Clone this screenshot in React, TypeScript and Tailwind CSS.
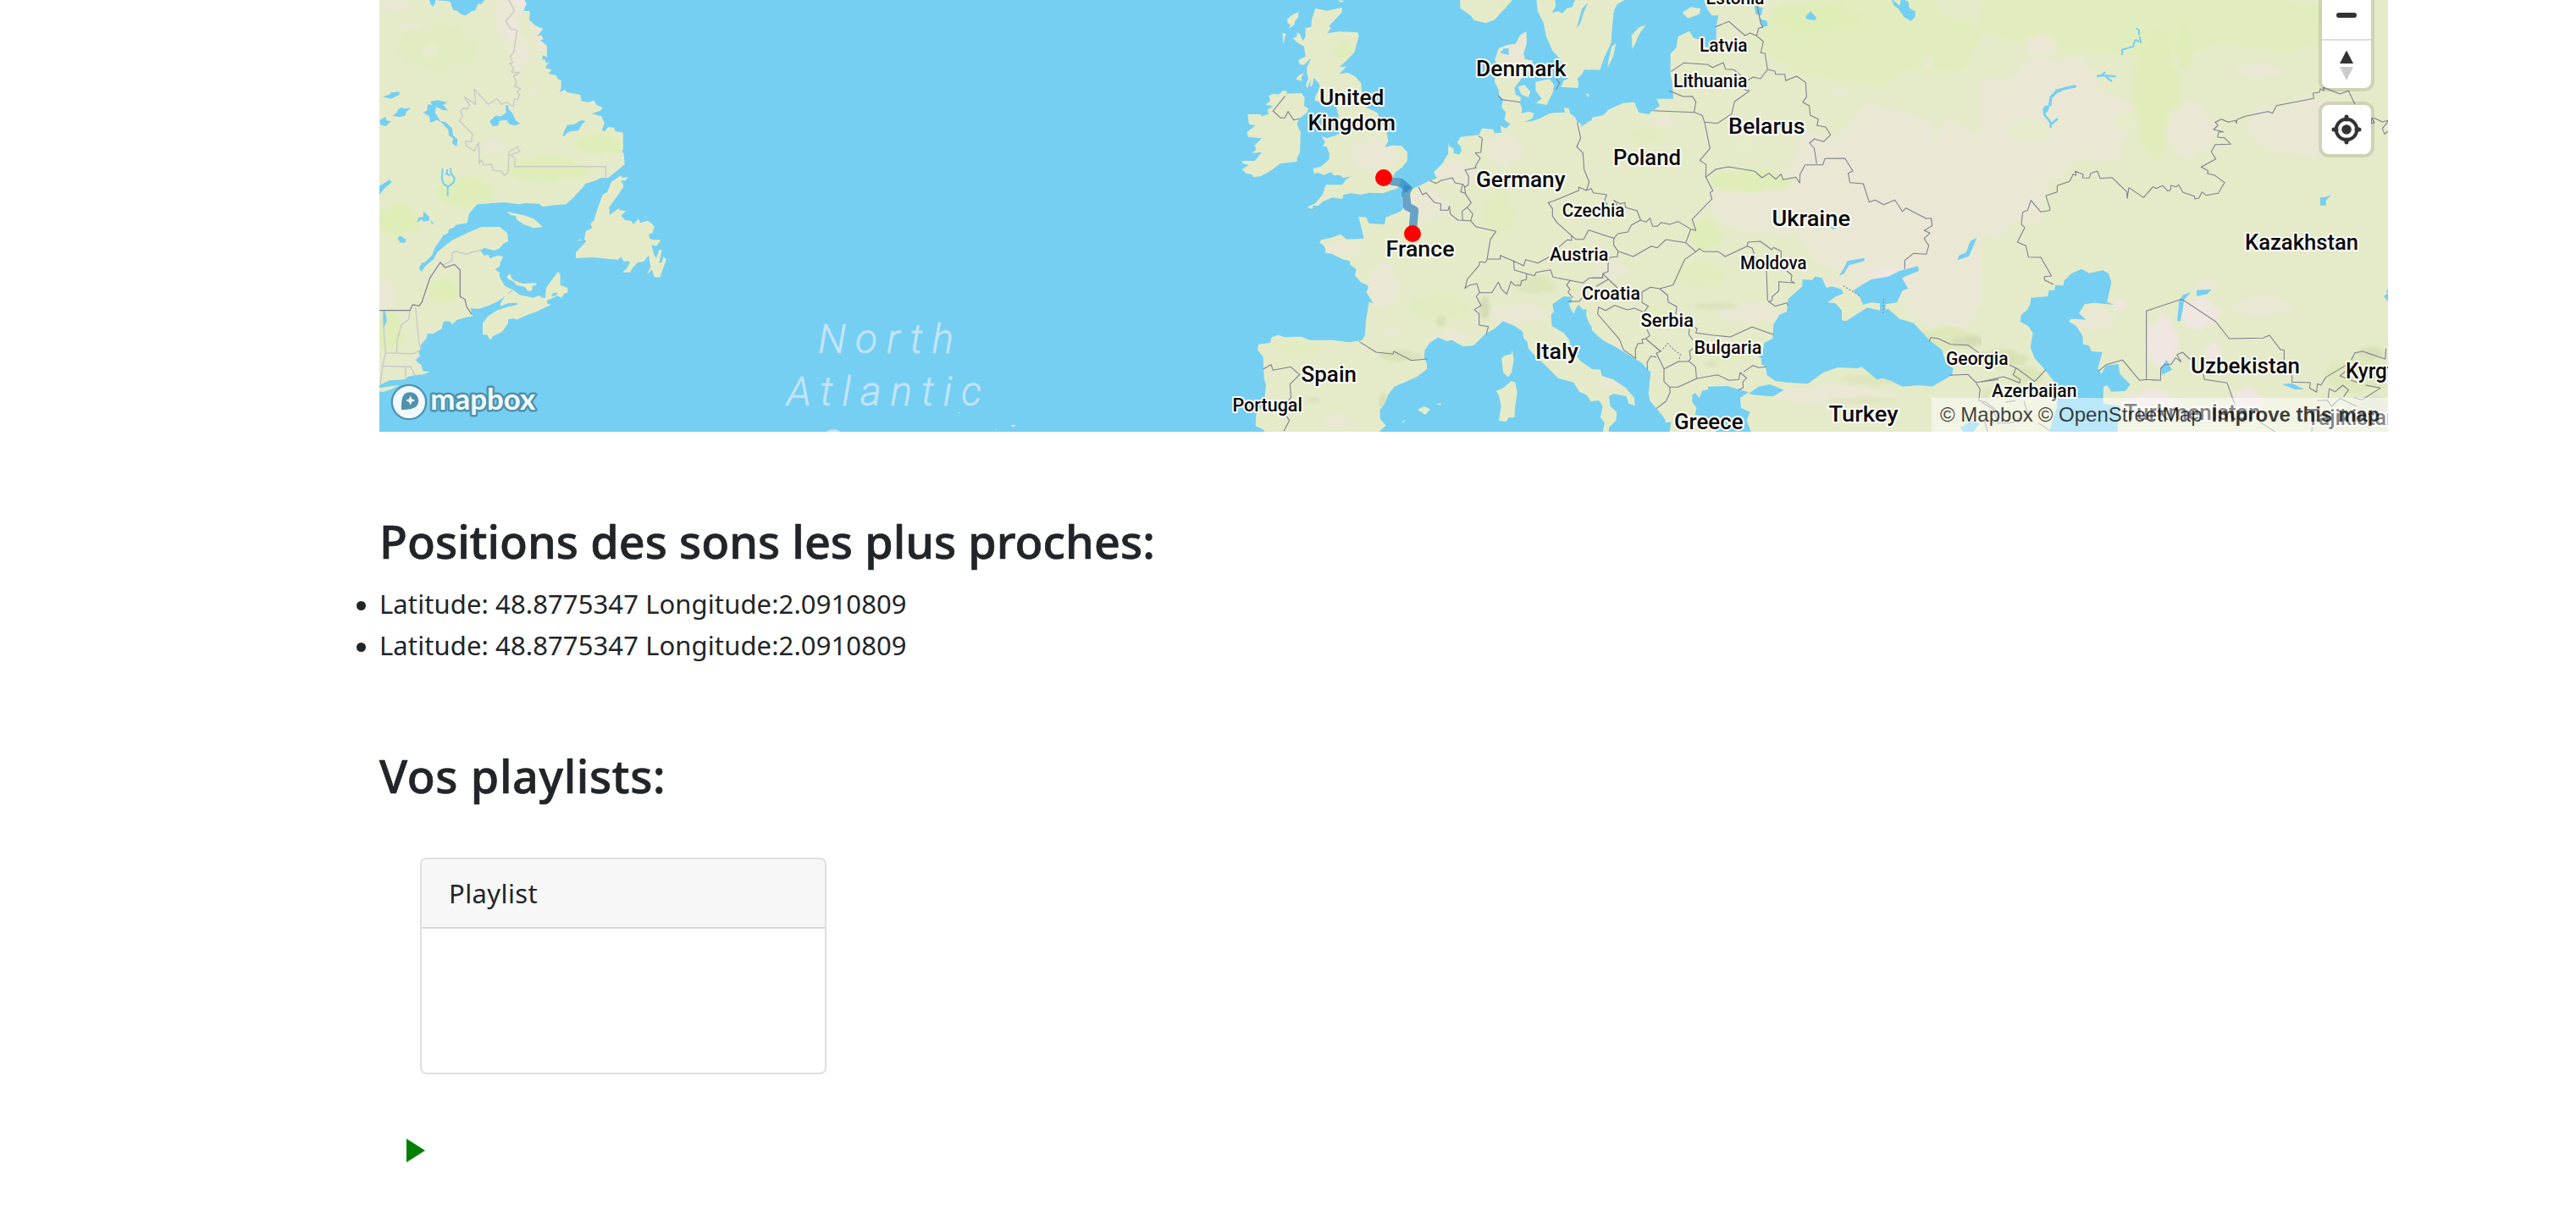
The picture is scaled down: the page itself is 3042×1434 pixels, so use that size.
import React from "react";

const SEA = "#75cff2";
const LAND = "#e5ebc9";

/* Map geometry is stored at three times the screen size, one group per region. */
const AMERICA =
  "M24,-5 200,-5 205,15 214,24 222,10 222,0 275,5 285,35 300,38 315,52 330,55 350,40 362,38 375,12 385,15 402,-5 535,-5 545,12 535,38 557,40 555,70 575,90 603,103 590,120 580,128 598,125 605,140 592,142 605,152 617,163 618,203 604,196 600,210 612,212 614,225 628,215 612,240 635,248 622,260 650,268 656,280 668,285 668,308 663,327 680,318 692,328 735,335 740,358 762,362 785,356 793,372 815,382 808,392 775,403 810,412 822,435 812,462 822,466 835,450 855,452 860,465 887,470 888,530 883,533 890,545 893,583 860,610 835,630 810,630 785,642 755,650 740,670 725,685 712,700 685,724 645,727 603,733 590,722 540,720 520,724 465,717 420,720 395,722 370,724 342,757 335,790 295,797 288,806 270,812 268,825 250,835 240,850 220,880 210,905 190,925 165,945 172,962 190,940 215,920 230,893 260,868 285,850 330,828 385,804 450,804 478,827 480,855 462,865 450,880 430,888 395,878 382,888 395,905 410,902 415,915 445,905 463,910 452,930 450,945 433,955 450,965 450,980 460,1000 470,1015 495,1025 520,1045 570,1055 590,1046 600,1055 612,1055 615,1020 640,985 658,962 665,975 665,1010 690,1020 692,1035 680,1040 668,1055 655,1048 618,1065 618,1075 632,1080 610,1090 580,1105 550,1115 510,1133 500,1128 480,1132 480,1145 465,1168 455,1178 428,1190 416,1205 407,1187 390,1185 390,1145 410,1120 440,1100 475,1088 512,1080 512,1073 480,1075 452,1085 455,1070 470,1050 440,1070 405,1085 375,1095 347,1092 355,1120 330,1125 300,1133 282,1150 275,1140 258,1138 250,1142 245,1165 215,1183 195,1182 190,1200 172,1220 170,1235 162,1245 168,1262 153,1275 160,1285 172,1292 178,1315 203,1318 180,1327 150,1330 125,1335 115,1345 60,1348 24,1365Z";
const AMERICA_ISLES = [
  "M24,1375 75,1367 95,1365 70,1378 40,1388 24,1388Z",
  "M475,750 500,755 545,765 570,775 590,792 603,805 570,808 535,795 510,778 507,765 490,762Z",
  "M475,982 487,968 492,985 500,993 530,1005 580,1003 580,1010 567,1012 565,1030 550,1032 540,1018 510,1010 500,998 482,990Z",
  "M905,627 897,640 880,640 890,660 870,690 838,735 840,762 872,738 875,745 898,747 880,765 895,780 915,783 925,795 942,775 948,790 975,782 998,800 992,825 978,830 982,845 990,850 1022,850 1005,872 988,868 998,905 1005,915 1015,885 1025,885 1015,932 1025,930 1030,910 1041,918 1028,955 1018,983 997,982 990,955 972,972 985,945 978,905 960,928 940,930 920,950 912,965 885,965 900,952 912,930 905,925 890,927 880,910 870,920 840,918 780,912 720,915 720,895 757,855 750,848 755,820 778,808 772,793 785,780 790,760 815,690 832,680 845,645 880,622 885,630Z",
  "M727,853 735,847 740,853Z",
  "M963,768 968,766 968,772Z",
];
const AMERICA_LAKES = [
  "M35,343 60,335 65,328 95,325 95,335 65,350Z",
  "M70,410 85,400 90,388 103,380 112,385 137,382 120,395 115,410 95,415Z",
  "M24,428 45,413 50,427 65,430 48,447 30,443Z",
  "M178,398 193,392 195,370 210,372 205,360 228,355 265,362 250,372 268,392 248,390 225,378 222,400 240,430 258,432 282,455 285,480 302,495 297,520 282,508 285,490 270,480 268,460 245,435 228,425 205,435 200,412Z",
  "M415,430 435,410 455,412 472,400 472,373 480,373 482,388 495,400 508,428 523,437 505,445 485,440 475,425 450,428 445,445 425,448Z",
  "M673,482 680,462 690,443 715,440 738,427 755,428 742,440 730,462 700,466 688,472 680,482Z",
  "M24,660 60,637 68,645 40,670 24,690Z",
  "M157,790 163,770 180,768 180,748 190,758 202,770 200,782 182,785 172,778Z",
  "M207,780 218,794 208,793Z",
  "M88,842 98,836 120,850 113,860 98,860Z",
  "M37,1100 45,1102 50,1135 40,1165 37,1140Z",
  "M165,955 175,930 188,932 175,962Z",
  "M632,1050 640,1037 655,1038 650,1048Z",
];

const CONTINENT =
  "M1207,112 1208,155 1197,190 1202,210 1230,215 1225,240 1195,270 1178,295 1165,312 1170,335 1188,345 1185,365 1192,385 1190,402 1215,395 1235,402 1228,420 1200,432 1225,430 1255,420 1290,402 1310,400 1345,398 1340,380 1358,385 1362,402 1380,415 1388,435 1402,438 1400,450 1430,430 1475,410 1500,390 1500,1198 1470,1195 1450,1175 1430,1145 1420,1120 1420,1095 1408,1097 1392,1080 1385,1090 1375,1112 1365,1095 1358,1075 1370,1070 1365,1052 1340,1050 1300,1078 1305,1105 1295,1115 1298,1155 1340,1180 1360,1205 1368,1240 1400,1280 1440,1308 1475,1308 1500,1330 1500,1530 1482,1530 1485,1505 1465,1480 1440,1430 1422,1400 1395,1388 1375,1355 1320,1340 1300,1320 1270,1290 1240,1262 1215,1235 1210,1210 1198,1200 1195,1175 1165,1155 1125,1138 1095,1165 1060,1185 1040,1205 1020,1225 985,1228 960,1215 945,1205 925,1208 895,1195 865,1215 848,1240 845,1265 855,1290 855,1308 820,1335 775,1355 740,1370 720,1395 705,1430 688,1455 690,1485 710,1508 685,1530 280,1530 275,1522 248,1510 250,1470 272,1440 280,1410 285,1365 278,1340 275,1265 255,1240 258,1220 300,1215 305,1195 330,1187 350,1195 410,1193 440,1205 520,1205 580,1213 600,1210 625,1205 635,1190 640,1130 650,1070 665,1075 650,1050 640,1035 648,1020 645,1010 620,1000 600,975 605,955 583,938 583,925 560,920 520,900 493,895 497,885 490,870 475,860 480,850 515,843 550,830 570,848 632,845 625,815 613,768 640,770 650,792 705,795 710,770 760,750 775,735 765,700 780,680 825,660 865,640 890,632 880,610 910,580 930,545 932,505 935,518 950,527 950,542 970,548 978,535 975,520 962,505 975,485 1040,478 1050,455 1090,458 1095,472 1120,470 1115,445 1135,455 1150,440 1130,425 1135,400 1120,380 1125,350 1110,340 1110,320 1095,290 1098,260 1120,235 1095,215 1103,190 1110,170 1140,160 1170,155 1185,125Z";
const EUROPE_ISLES = [
  "M460,30 500,38 555,27 553,45 508,92 515,100 502,118 545,112 610,115 614,128 598,185 570,215 545,238 570,235 545,262 575,258 600,270 622,295 625,330 640,380 680,400 690,430 712,465 718,500 705,522 735,515 765,517 786,540 785,572 765,595 745,610 735,625 765,640 760,650 750,668 735,672 700,685 650,683 620,690 585,685 560,690 555,705 520,700 485,715 470,730 452,728 450,740 430,735 460,720 485,690 497,655 555,655 570,635 588,625 560,630 545,620 525,622 515,610 490,620 470,612 455,615 452,597 480,590 508,565 510,545 500,520 485,517 495,505 483,483 500,490 530,480 555,470 545,440 540,400 530,365 458,358 460,340 475,315 475,300 455,275 450,300 440,310 445,280 430,315 427,300 435,275 430,262 430,240 445,205 420,230 405,228 400,212 425,200 420,165 395,150 380,135 395,130 395,115 405,120 415,145 425,130 425,100 445,95 447,70Z",
  "M360,68 375,55 400,42 400,60 388,75 385,88 365,102 372,88 362,82Z",
  "M343,115 357,122 352,130 348,158 346,150Z",
  "M390,280 405,265 420,258 410,275 412,288Z",
  "M295,340 310,332 330,335 345,320 362,325 355,332 410,330 422,345 420,375 435,385 430,400 402,421 395,440 408,470 405,540 395,560 395,572 335,580 295,610 265,625 240,628 235,618 215,615 200,600 225,585 200,578 203,570 245,570 270,540 235,542 250,530 245,515 270,490 222,485 217,468 248,445 225,440 220,405 265,405 270,412 295,405 290,390 310,375 283,372 300,358Z",
  "M972,-5 974,30 1010,55 1022,72 1065,82 1095,70 1140,20 1162,-5Z",
  "M1243,-5 1247,40 1268,80 1278,130 1300,180 1328,210 1340,240 1350,260 1355,280 1340,285 1330,308 1390,312 1393,295 1388,280 1405,262 1412,247 1470,248 1475,220 1500,170 1500,-5Z",
  "M1178,308 1200,300 1222,325 1215,345 1190,335Z",
  "M1240,290 1290,280 1305,300 1302,325 1290,350 1280,372 1240,365 1262,350 1240,320Z",
  "M1415,330 1430,335 1428,345Z",
  "M1157,1240 1160,1255 1163,1275 1155,1320 1143,1337 1125,1320 1120,1270 1130,1260 1155,1255Z",
  "M1100,1385 1125,1375 1155,1350 1168,1355 1175,1390 1168,1440 1165,1480 1145,1480 1135,1495 1110,1490 1118,1440 1110,1400Z",
  "M822,1452 845,1440 867,1450 850,1470Z",
  "M888,1430 905,1430 903,1437Z",
  "M765,1495 777,1488 773,1496Z",
  "M540,0 562,3 552,10Z",
];
const NORDIC_LAKES = [
  "M1308,-5 1312,20 1298,45 1320,40 1335,47 1350,30 1370,25 1382,-5Z",
  "M1427,8 1405,30 1385,102 1400,80 1410,45Z",
  "M1115,188 1128,172 1145,172 1145,195Z",
];

const EAST_SEAS = [
  "M123,-5 90,15 78,35 72,90 68,150 62,165 45,200 28,248 -3,247 -3,418 40,408 60,388 110,365 150,362 165,398 200,405 215,393 240,375 228,350 288,350 285,300 278,260 278,190 298,170 305,130 345,110 360,135 385,140 395,165 425,170 440,140 440,95 448,55 425,55 410,35 395,-5Z",
  "M695,1060 745,1015 745,990 780,992 790,980 815,985 830,1020 850,1015 885,1025 890,1040 865,1050 835,1072 862,1075 885,1100 885,1135 900,1138 935,1115 975,1090 1020,1100 1050,1095 1090,1130 1140,1145 1195,1205 1240,1240 1255,1290 1280,1305 1275,1330 1240,1350 1205,1370 1160,1365 1100,1370 1060,1350 1030,1340 1010,1345 980,1320 955,1300 940,1305 870,1302 820,1320 765,1360 690,1355 650,1350 620,1330 615,1300 600,1290 600,1270 590,1265 605,1250 610,1215 640,1200 643,1150 665,1115 690,1105Z",
  "M925,1030 955,1010 990,990 1050,980 1090,960 1155,943 1158,960 1098,985 1120,1022 1100,1030 1080,1072 1040,1078 1040,1100 1020,1100 1020,1075 990,1072 960,1080 950,1055Z",
  "M555,1395 590,1370 630,1362 680,1382 640,1405 580,1400Z",
  "M355,1400 365,1392 380,1410 390,1385 412,1380 410,1370 480,1368 520,1380 555,1390 525,1410 528,1445 560,1460 548,1490 563,1530 440,1530 400,1475 365,1470 370,1445 355,1425Z",
  "M-3,1167 20,1190 45,1210 75,1225 110,1245 150,1270 175,1285 198,1310 208,1320 200,1395 205,1420 230,1450 255,1480 262,1498 280,1495 275,1530 60,1530 60,1515 85,1490 88,1460 65,1440 60,1405 75,1395 122,1405 130,1430 152,1437 150,1410 120,1375 75,1345 35,1332 30,1310 -3,1307Z",
  "M-3,1422 25,1420 38,1440 30,1480 45,1500 38,1530 -3,1530Z",
  "M575,20 605,28 600,55 580,50Z",
  "M595,65 620,75 622,92 600,97Z",
  "M757,58 775,40 795,62 790,72 760,68Z",
  "M1060,-5 1070,20 1085,30 1105,60 1130,75 1145,60 1145,40 1125,30 1120,5 1095,-5 1090,20Z",
  "M875,978 890,955 905,925 965,914 965,925 910,940 893,970Z",
  "M837,802 870,805 855,813Z",
  "M1363,842 1350,875 1335,908 1295,922 1300,905 1325,895 1340,855Z",
  "M1305,1515 1340,1495 1375,1500 1350,1530 1315,1530Z",
];
const EAST_ISLES = [
  "M320,45 350,25 385,30 380,50 340,65Z",
  "M190,88 165,125 155,150 143,175 140,125 165,98Z",
  "M85,152 75,200 55,240 58,215 70,165Z",
];
const CASPIAN =
  "M290,1012 262,1010 258,1028 238,1030 235,1050 175,1055 172,1080 160,1100 140,1115 137,1140 165,1155 182,1180 173,1230 188,1270 225,1310 255,1350 262,1400 268,1440 240,1530 480,1530 490,1440 430,1430 432,1370 445,1365 460,1388 510,1385 527,1362 490,1325 485,1290 440,1295 425,1325 412,1305 428,1248 390,1245 380,1225 360,1220 358,1190 335,1155 310,1140 315,1130 340,1130 370,1133 345,1110 365,1078 400,1073 470,1080 445,1070 460,1000 450,970 430,958 380,968 355,953 320,968 292,995Z";
const ASIA_LAKES = [
  "M700,1065 715,1045 742,1035 718,1062 712,1100 705,1138 693,1138Z",
  "M763,1050 762,1028 815,1025 800,1042Z",
  "M635,1305 655,1275 675,1310 640,1328Z",
  "M1065,1362 1100,1358 1143,1380 1110,1380Z",
  "M1200,700 1220,698 1240,690 1220,710 1220,728 1200,728Z",
  "M1445,1020 1434,1030 1438,1040 1425,1050 1445,1075Z",
];

const LIGHT_BORDERS =
  "M480,-5 490,12 502,38 472,75 490,103 512,107 500,185 487,200 497,222 485,224 500,242 492,255 520,258 500,270 510,292 503,305 525,315 512,325 520,335 515,352 503,352 498,378 475,362 458,370 440,350 410,370 360,316 365,370 325,342 345,375 335,387 322,383 312,392 318,412 308,428 354,475 350,503 330,500 332,517 360,535 376,505 378,580 385,567 395,585 420,582 428,604 458,607 467,622 480,610 484,538 513,520 522,537 490,548 505,563 503,590 826,590 826,632 M250,940 282,922 282,897 295,890 330,901 385,885 M480,1042 495,1028 M132,1100 128,1132 103,1150 88,1200 85,1252 M152,1088 165,1220 172,1235 M37,1130 46,1250 35,1297 28,1362 M46,1250 142,1254 165,1243 M35,1297 135,1300 150,1330 M116,1300 116,1343";
const US_BORDER =
  "M24,1100 132,1100 142,1080 165,1084 175,1070 203,985 240,930 257,948 290,937 310,957 310,1052 327,1060 333,1087 352,1115";
const WEST_BORDERS =
  "M353,340 310,393 337,418 352,418 363,395 383,425 402,421 M1108,338 1120,353 1185,362 M1315,280 1325,295 1312,318 M1038,482 1051,490 1046,540 1026,542 1044,560 1026,590 1030,595 990,602 1003,625 1002,655 990,662 M865,640 888,650 905,640 945,630 955,648 982,653 975,680 992,685 988,660 982,653 M825,662 840,690 852,683 882,718 905,722 903,745 930,745 935,730 938,758 965,780 1010,782 1028,803 1100,820 1080,848 1068,920 M990,685 1012,718 998,735 980,748 982,780 M998,735 1018,758 1010,782 M1068,918 1115,918 1115,905 1130,912 1162,925 1198,942 1205,920 1248,932 1290,910 M1068,920 1062,930 1042,928 1040,940 998,990 990,1022 1003,1012 1032,1005 1042,1037 1085,1037 1108,1000 1120,1025 1138,1043 1153,997 1165,1010 1187,1012 1190,995 1208,990 1208,970 1165,957 1162,925 M1042,1037 1030,1050 1047,1083 1023,1097 1040,1112 1040,1152 1073,1157 1065,1185 M1208,970 1236,977 1242,965 1293,956 1302,982 1408,1003 1430,985 1480,985 M1388,435 1400,490 1386,520 1408,542 1412,600 1430,645 1420,675 M1420,675 1393,663 1393,675 1305,712 1285,718 1300,740 1300,765 1315,788 1382,848 1410,848 1428,815 1520,845 M1420,675 1437,668 1445,683 1492,690 1485,710 1500,735 M1382,848 1368,835 1367,852 1352,850 1323,875 M615,1210 675,1248 735,1255 738,1245 800,1277 857,1272 M275,1308 303,1292 310,1312 373,1300 404,1328 370,1362 374,1408 360,1425 M358,1475 368,1490 348,1528 M1362,995 1350,1010 1362,1025 1355,1035 1372,1055 M1355,1068 1395,1068 1405,1055";
const EAST_BORDERS =
  "M438,95 485,76 542,126 560,117 583,127 607,147 598,187 613,190 622,246 648,252 650,263 683,263 686,286 725,270 757,292 760,343 747,362 770,375 773,408 802,422 797,445 828,450 845,478 820,502 788,492 771,507 787,525 796,581 M585,20 597,80 605,97 590,100 583,127 M280,253 325,223 410,229 427,239 465,222 473,245 503,247 530,270 M548,287 570,273 597,279 622,246 M273,322 325,343 355,341 368,360 362,398 390,408 399,433 445,437 495,403 505,360 558,322 540,318 M218,392 362,398 M399,433 418,526 382,568 404,583 403,628 428,676 418,683 425,705 355,777 368,817 350,812 305,785 275,795 245,788 232,802 215,802 205,773 192,787 172,780 140,797 127,822 92,828 77,845 77,868 92,890 M172,780 160,747 118,735 117,718 100,722 77,710 90,728 M403,628 438,600 483,591 577,607 602,630 627,614 651,635 670,617 677,637 722,628 736,648 737,617 755,584 818,584 825,562 896,561 924,606 907,614 914,647 961,651 982,716 1003,709 1033,725 1073,709 1100,750 1112,737 1185,775 1202,773 1205,800 1177,817 1197,826 1177,845 1193,870 1184,901 1138,898 1108,923 1108,953 M92,890 146,909 210,872 231,878 262,849 332,860 350,812 M332,860 368,892 380,881 397,892 448,892 472,909 550,872 552,858 596,855 637,885 643,877 670,890 670,915 M690,960 708,975 705,995 718,1003 662,998 662,1030 638,1052 638,1065 625,1068 648,1085 690,1073 695,1085 M550,872 568,880 585,930 M618,960 622,1065 M368,892 328,920 287,1010 240,1023 207,1018 177,1035 177,1072 200,1085 185,1105 M92,890 90,910 62,912 57,935 57,962 38,970 38,985 0,985 M38,970 90,1020 M57,990 15,1015 M180,1105 150,1092 125,1098 80,1082 48,1100 23,1088 20,1113 97,1202 112,1240 155,1270 153,1240 163,1217 180,1217 177,1202 190,1200 205,1190 195,1168 M240,1023 268,1047 270,1070 300,1087 297,1115 M355,1155 372,1165 368,1180 430,1188 490,1194 567,1159 643,1186 M190,1200 243,1245 228,1252 255,1307 255,1352 275,1372 305,1372 370,1342 367,1300 343,1280 305,1282 255,1307 M228,1265 208,1262 195,1285 197,1310 M345,1165 343,1185 357,1205 M357,1235 345,1245 350,1270 343,1280 M370,1342 445,1328 485,1348 520,1345 525,1320 548,1340 535,1352 535,1375 518,1382 M537,1318 570,1295 590,1303 617,1300 M275,1372 277,1390 262,1422 228,1448 M1195,1210 1200,1196 1228,1200 1270,1220 1332,1223 1370,1250 M1267,1330 1332,1327 1360,1355 1440,1345 M1360,1355 1375,1380 1370,1420 1395,1425 1440,1460 M1390,1490 1402,1530";
const ASIA_BORDERS =
  "M255,1008 223,992 223,980 248,978 210,912 166,911 157,871 127,858 153,807 141,795 146,752 163,745 175,710 210,751 240,746 243,740 228,694 268,680 268,658 312,643 325,617 335,621 332,607 360,618 358,630 382,631 387,614 410,606 420,632 462,629 515,680 516,703 522,665 574,700 608,661 618,668 642,658 660,677 670,673 671,657 690,662 698,655 714,682 754,695 756,705 770,702 781,680 795,692 838,685 861,647 824,620 800,615 803,605 778,592 830,563 814,538 828,512 883,511 860,488 836,486 840,468 857,467 822,459 838,444 828,433 850,422 874,433 900,427 903,437 906,423 935,412 1015,395 1031,401 1045,374 1177,349 1175,330 1197,327 1200,315 1213,322 1211,310 1270,333 1300,322 1323,370 M1380,437 1383,417 1392,435 1380,437 M1390,418 1420,432 1440,427 M1440,430 1420,455 1428,475 1440,465 M584,1345 584,1102 710,1060 830,1140 877,1200 997,1198 1020,1188 1060,1240 1072,1240 1072,1275 M415,1315 442,1292 500,1276 560,1348 584,1345 634,1348 635,1305 650,1292 673,1290 687,1268 707,1282 692,1258 712,1248 740,1275 M785,1325 790,1345 870,1357 900,1440 M1100,1330 1100,1354 1165,1356 1162,1375 1187,1390 1190,1360 1202,1365 1220,1337 1290,1295 M1310,1275 1323,1250 1350,1245 1430,1272 1433,1235 M1290,1315 1270,1332 1330,1355 M1360,1365 1413,1375 1347,1417 1320,1410 M1228,1410 1232,1378 1253,1388 1280,1365 1300,1382 1283,1405 M95,1292 125,1305 188,1352 228,1310 M0,1353 78,1335 135,1357 137,1345 112,1328 122,1305";
const FAINT_BORDERS =
  "M0,1425 40,1450 60,1500 110,1498 140,1480 M120,1420 85,1425 M150,1420 165,1470 M200,1498 240,1525 M985,1495 1040,1530 M1190,1420 1225,1418 1240,1440 1270,1412 1330,1440 M1170,1530 1172,1490";

type Patch = [number, number, number, number, string];
const GREEN = "#dfedb9";
const BEIGE = "#eae8d4";
const PINK = "#f0e6e2";

const americaPatches: Patch[] = [
  [230, 170, 150, 90, "#e1ecc2"], [130, 95, 45, 14, BEIGE], [205, 180, 28, 25, "#e6ebcf"], [480, 60, 45, 100, BEIGE],
  [520, 190, 40, 60, BEIGE], [500, 110, 16, 35, PINK], [525, 8, 25, 25, PINK], [572, 330, 18, 18, BEIGE],
  [80, 20, 60, 20, BEIGE], [800, 510, 90, 40, GREEN], [620, 600, 160, 50, GREEN], [330, 680, 110, 60, GREEN],
  [90, 780, 80, 60, GREEN], [45, 1050, 40, 60, BEIGE], [60, 1170, 50, 80, GREEN], [250, 1030, 60, 50, GREEN],
  [835, 820, 20, 15, BEIGE], [430, 520, 50, 25, BEIGE], [600, 110, 30, 80, BEIGE],
];
const westPatches: Patch[] = [
  [670, 550, 90, 60, BEIGE], [560, 180, 40, 30, GREEN], [850, 730, 90, 60, BEIGE], [1180, 180, 60, 110, BEIGE],
  [1130, 530, 70, 60, BEIGE], [960, 610, 80, 50, BEIGE], [700, 1010, 60, 90, BEIGE], [560, 880, 70, 30, BEIGE],
  [1180, 1110, 110, 40, BEIGE], [1110, 760, 60, 90, "#e2ecc0"], [900, 1090, 120, 60, "#e2ecc2"], [940, 1190, 80, 20, BEIGE],
  [540, 1490, 50, 30, BEIGE], [730, 1180, 40, 15, BEIGE], [400, 1230, 90, 25, "#e2ecc0"], [1240, 1010, 80, 35, "#dde5bc"],
  [1060, 1090, 18, 45, "#d3d9b3"], [760, 1260, 80, 22, "#dae2b9"], [905, 1140, 18, 22, "#d6dfb6"], [1280, 640, 60, 30, GREEN],
  [1140, 30, 20, 30, GREEN], [700, 1420, 14, 30, "#d9deb6"], [455, 1418, 24, 9, "#d8deb8"],
];
const eastPatches: Patch[] = [
  [980, 130, 420, 180, "#e1edbe"], [800, 60, 160, 60, GREEN], [1010, 690, 350, 330, BEIGE], [1280, 820, 260, 400, BEIGE],
  [660, 720, 260, 120, BEIGE], [560, 640, 160, 45, GREEN], [400, 830, 60, 60, GREEN], [1190, 220, 18, 28, BEIGE],
  [880, 330, 35, 14, BEIGE], [540, 510, 60, 25, "#e4eccb"], [190, 480, 60, 40, "#e2ecc2"], [250, 430, 60, 18, BEIGE],
  [560, 1110, 120, 40, BEIGE], [900, 1000, 100, 20, BEIGE], [1050, 970, 90, 18, PINK], [1100, 1000, 22, 22, PINK],
  [1250, 1200, 120, 45, "#dee8ba"], [1340, 1210, 70, 22, "#d6ddb5"], [440, 1085, 85, 12, "#dae1b8"], [850, 1400, 220, 40, BEIGE],
  [1000, 1345, 130, 22, "#dee6bc"], [960, 1420, 140, 12, "#e0e5c0"], [230, 1120, 60, 30, "#e1ecbe"], [480, 1260, 90, 22, "#e1ecbe"],
  [60, 1360, 60, 18, BEIGE], [380, 970, 90, 60, "#e2ecc0"], [70, 960, 60, 30, BEIGE], [420, 1290, 26, 8, "#d6deb4"],
];
const asiaPatches: Patch[] = [
  [600, 60, 700, 150, "#e1edbe"], [620, 330, 90, 250, "#e0edbb"], [220, 420, 330, 220, BEIGE], [40, 660, 200, 190, BEIGE],
  [740, 460, 90, 110, BEIGE], [1150, 450, 220, 110, BEIGE], [980, 250, 90, 30, BEIGE], [210, 160, 60, 40, BEIGE],
  [320, 270, 90, 70, BEIGE], [170, 460, 80, 40, "#e6ebcb"], [520, 430, 50, 40, "#e6ebc8"], [1060, 120, 230, 70, "#e2ecbf"],
  [640, 1210, 60, 95, PINK], [770, 1110, 75, 60, PINK], [490, 1080, 25, 20, PINK], [400, 1130, 80, 45, BEIGE],
  [1000, 1085, 110, 40, BEIGE], [800, 1010, 50, 25, BEIGE], [820, 1260, 30, 50, PINK], [600, 1430, 110, 50, PINK],
  [940, 1420, 60, 50, PINK], [60, 1270, 110, 35, "#d9e1b6"], [160, 1330, 60, 35, "#dde5ba"], [1330, 1330, 120, 70, "#dfe7bc"],
  [1380, 1250, 50, 25, "#d8e0b8"], [20, 1400, 60, 30, "#dfe6bf"], [1390, 1440, 60, 40, "#dbdfc4"], [720, 170, 30, 90, GREEN],
];

/* Smooth irregular blobs for land cover and relief. */
function Patches({ items, clip }: { items: Patch[]; clip?: string }) {
  return (
    <g clipPath={clip}>
      <g filter="url(#soft)">
        {items.map(([cx, cy, rx, ry, fill], i) => (
          <path
            key={i}
            fill={fill}
            d={`M${cx - rx},${cy + ry * 0.1} L${cx - rx * 0.75},${cy - ry * 0.7} ${cx - rx * 0.4},${cy - ry * 0.6} ${cx - rx * 0.1},${cy - ry} ${cx + rx * 0.55},${cy - ry * 0.8} ${cx + rx * 0.6},${cy - ry * 0.45} ${cx + rx},${cy - ry * 0.2} ${cx + rx * 0.8},${cy + ry * 0.7} ${cx + rx * 0.35},${cy + ry * 0.65} ${cx + rx * 0.1},${cy + ry} ${cx - rx * 0.6},${cy + ry * 0.75}Z`}
          />
        ))}
      </g>
    </g>
  );
}

function Shapes({ items, fill }: { items: string[]; fill: string }) {
  return <>{items.map((d, i) => <path key={i} d={d} fill={fill} />)}</>;
}

/* x start, x end, baseline (screen pixels), font size, text */
type Label = [number, number, number, number, string];
const labels: Label[] = [
  [1559, 1633.5, 124, 25.5, "United"], [1545.5, 1647, 153.5, 25.5, "Kingdom"], [1744, 1848.5, 90, 25.5, "Denmark"],
  [1744, 1847.5, 220.7, 25.5, "Germany"], [1637.5, 1716.5, 303, 25.5, "France"], [1537.5, 1601, 451, 25.5, "Spain"],
  [1456.5, 1537, 486.3, 21.5, "Portugal"], [1814, 1863, 424.3, 25.5, "Italy"], [1845.7, 1917.5, 255.7, 21.5, "Czechia"],
  [1831, 1898.5, 307.7, 21.5, "Austria"], [1869, 1936, 353.7, 21.5, "Croatia"], [2015.5, 2082.5, 5, 21.5, "Estonia"],
  [2008, 2062.5, 61, 21.5, "Latvia"], [1977, 2062.5, 103.3, 21.5, "Lithuania"], [2042, 2130.5, 157.7, 25.5, "Belarus"],
  [1906, 1984, 195.3, 25.5, "Poland"], [2093.5, 2184, 266.7, 25.5, "Ukraine"], [2056, 2132.5, 317.7, 21.5, "Moldova"],
  [1938.5, 1999, 386, 21.5, "Serbia"], [2001.5, 2079.5, 418.3, 21.5, "Bulgaria"], [2160.5, 2240.5, 497.7, 25.5, "Turkey"],
  [1978, 2057.5, 507.3, 25.5, "Greece"], [2299, 2370.5, 431, 21.5, "Georgia"], [2652, 2784, 294.7, 25.5, "Kazakhstan"],
  [2353, 2451.5, 469.3, 21.5, "Azerbaijan"], [2588, 2715, 440.7, 25.5, "Uzbekistan"], [2771, 2889, 446.7, 25.5, "Kyrgyzstan"],
  [2509, 2668.5, 495.7, 25.5, "Turkmenistan"], [2725, 2831, 501.7, 25.5, "Tajikistan"],
];

function WorldMap() {
  return (
    <svg className="block h-[510px] w-[2372px]" viewBox="448 0 2372 510">
      <defs>
        <filter id="soft" x="-5%" y="-5%" width="110%" height="110%">
          <feGaussianBlur stdDeviation="7" />
        </filter>
        <clipPath id="america"><path d={AMERICA} /></clipPath>
        <clipPath id="west">
          <path d={CONTINENT} />
          {EUROPE_ISLES.map((d, i) => <path key={i} d={d} />)}
        </clipPath>
        <clipPath id="east"><rect x="0" y="-5" width="1380" height="1540" /></clipPath>
        <clipPath id="asia"><rect x="0" y="-5" width="1440" height="1540" /></clipPath>
      </defs>
      <rect x="448" width="2372" height="510" fill={SEA} />

      <g transform="translate(440 0) scale(.33333)">
        <path d={AMERICA} fill={LAND} />
        <Patches items={americaPatches} clip="url(#america)" />
        <Shapes items={AMERICA_ISLES} fill={LAND} />
        <Shapes items={AMERICA_LAKES} fill={SEA} />
        <path d="M248,597 247,615 245,632 252,652 268,662 288,645 290,630 278,615 276,595 M265,600 262,618 M266,660 266,695 M258,615 275,622" fill="none" stroke={SEA} strokeWidth="6" />
        <path d={LIGHT_BORDERS} fill="none" stroke="#cbcbcb" strokeWidth="4.5" strokeLinejoin="round" />
        <path d={US_BORDER} fill="none" stroke="#7e7e90" strokeWidth="3.6" />
      </g>

      <g transform="translate(1400 0) scale(.33333)">
        <path d={CONTINENT} fill={LAND} />
        <Shapes items={EUROPE_ISLES} fill={LAND} />
        <Patches items={westPatches} clip="url(#west)" />
        <Shapes items={NORDIC_LAKES} fill={SEA} />
      </g>

      <g transform="translate(1880 0) scale(.33333)">
        <rect x="-1" y="-5" width="1440" height="1540" fill={LAND} />
        <g clipPath="url(#east)"><Patches items={eastPatches} /></g>
      </g>
      <g transform="translate(2340 0) scale(.33333)">
        <rect x="0" y="-5" width="1440" height="1540" fill={LAND} />
        <g clipPath="url(#asia)"><Patches items={asiaPatches} /></g>
        <path d={CASPIAN} fill={SEA} />
        <Shapes items={ASIA_LAKES} fill={SEA} />
        <path d="M335,305 300,312 268,322 246,345 242,375" fill="none" stroke={SEA} strokeWidth="10" />
        <path d="M262,315 285,325 262,330Z M242,372 236,392 220,410 217,385 225,375Z" fill={SEA} />
        <path d="M222,405 245,435 245,452 M248,440 270,420" fill="none" stroke={SEA} strokeWidth="8" />
        <path d="M498,195 498,176 537,165 545,140 M548,100 558,108 558,125 M560,130 565,153 M545,140 558,148" fill="none" stroke={SEA} strokeWidth="6" />
        <path d="M408,270 430,267 476,271 M438,255 425,268 M440,272 462,288" fill="none" stroke={SEA} strokeWidth="7" />
      </g>
      <g transform="translate(1880 0) scale(.33333)">
        <Shapes items={EAST_SEAS} fill={SEA} />
        <Shapes items={EAST_ISLES} fill={LAND} />
      </g>

      <g fill="none" stroke="#7c7d90" strokeWidth="3.2" strokeLinejoin="round">
        <path transform="translate(1400 0) scale(.33333)" d={WEST_BORDERS} />
        <g transform="translate(1880 0) scale(.33333)">
          <path d={EAST_BORDERS} />
          <path d="M243,1245 268,1217 290,1240 313,1255 308,1280 M1033,1057 1031,1113 M890,1013 945,1045" strokeDasharray="6 6" />
        </g>
        <g transform="translate(2340 0) scale(.33333)">
          <path d={ASIA_BORDERS} />
          <path d={FAINT_BORDERS} />
        </g>
      </g>

      <g fill="#c5e4fb" stroke="#c5e4fb" strokeWidth=".5" fontFamily='Roboto, "Liberation Sans", sans-serif' fontWeight="300" fontStyle="italic" fontSize="48">
        <text x="966" y="416.5" textLength="160" lengthAdjust="spacing">North</text>
        <text x="929" y="479" textLength="230" lengthAdjust="spacing">Atlantic</text>
        <text x="965" y="541.5" textLength="166" lengthAdjust="spacing">Ocean</text>
      </g>
      <path d="M1194,502h5l-1,2h-3z M1132,487h1v1h-1z M1176,507h1v1h-1z" fill="#f0e6e2" />

      <g
        fill="#0b0b0d"
        stroke="#fbfcf6"
        strokeWidth="4"
        strokeLinejoin="round"
        paintOrder="stroke"
        fontFamily='Roboto, "Liberation Sans", sans-serif'
        fontWeight="500"
      >
        {labels.map(([x0, x1, y, size, text]) => (
          <text key={text} x={x0 - 1} y={y} fontSize={size} textLength={x1 - x0 + 2} lengthAdjust="spacingAndGlyphs">
            {text}
          </text>
        ))}
      </g>

      <g transform="translate(1400 0) scale(.33333)">
        <g fill="none" stroke="#2f86c2" strokeOpacity=".7" strokeWidth="29" strokeLinejoin="round">
          <path d="M702,632 L735,643 765,648 792,672" />
          <path d="M792,660 L780,685 786,732 811,745 805,815" />
        </g>
        <circle cx="702" cy="630" r="30" fill="#ff0000" />
        <circle cx="804" cy="828" r="30" fill="#ff0000" />
      </g>

      <g transform="translate(440 0) scale(.33333)">
        <circle cx="129" cy="1425" r="60.5" fill="#f1faff" stroke="#5092ab" strokeWidth="7" />
        <path d="M102,1452 C102,1420 102,1391 133,1390 A30,30 0 0 1 163,1420 C162,1448 134,1453 102,1452Z" fill="#5092ab" />
        <path d="M134,1402 L139,1414 151,1419 139,1424 134,1436 129,1424 117,1419 129,1414Z" fill="#f1faff" />
        <text
          x="205"
          y="1452"
          textLength="372"
          lengthAdjust="spacingAndGlyphs"
          fontFamily='Lato, "Open Sans", sans-serif'
          fontWeight="700"
          fontSize="102"
          fill="#f1faff"
          stroke="#5092ab"
          strokeWidth="15"
          strokeLinejoin="round"
          paintOrder="stroke"
        >
          mapbox
        </text>
      </g>
    </svg>
  );
}

function MapControls() {
  return (
    <div className="absolute top-[-12px] right-[20px] flex w-[58px] flex-col gap-[20px]">
      <div className="rounded-[8px] bg-white shadow-[0_0_0_4px_rgba(0,0,0,0.1)]">
        <button className="flex h-[60px] w-full items-center justify-center border-b-2 border-[#dddddd]">
          <span className="mt-[2px] h-[6px] w-[24px] rounded-full bg-[#333333]" />
        </button>
        <button className="flex h-[56px] w-full items-center justify-center">
          <svg className="h-[58px] w-[58px] shrink-0" viewBox="0 0 58 58">
            <path d="M29 12.5 L37 28 H21Z" fill="#333" />
            <path d="M29 48 L37 32 H21Z" fill="#ccc" />
          </svg>
        </button>
      </div>
      <button className="flex h-[58px] w-full items-center justify-center rounded-[8px] bg-white shadow-[0_0_0_4px_rgba(0,0,0,0.1)]">
        <svg className="h-[58px] w-[58px]" viewBox="0 0 58 58">
          <circle cx="29" cy="29" r="12.2" fill="none" stroke="#333" strokeWidth="4" />
          <circle cx="29" cy="29" r="5.8" fill="#333" />
          <path d="M29 14v3M29 41v3M14 29h3M41 29h3" stroke="#333" strokeWidth="5" strokeLinecap="round" />
        </svg>
      </button>
    </div>
  );
}

export default function App() {
  return (
    <main className="h-[1434px] overflow-hidden bg-white pl-[448px] font-['Noto_Sans','Open_Sans',sans-serif] text-[#212529]">
      <section className="relative h-[510px] w-[2372px] overflow-hidden">
        <WorldMap />
        <MapControls />
        <div className="absolute right-0 bottom-0 flex h-[40px] w-[539px] items-center gap-[6px] bg-white/50 pl-[10px] font-['Liberation_Sans',Arial,sans-serif] text-[24px] whitespace-nowrap text-black/75">
          <span>© Mapbox</span>
          <span>© OpenStreetMap</span>
          <span className="pl-[5px] font-bold">Improve this map</span>
        </div>
      </section>

      <h3 className="mt-[96px] h-[67px] text-[54px] leading-[67px] font-medium whitespace-nowrap [-webkit-text-stroke:0.7px_#212529]">
        Positions des sons les plus proches:
      </h3>
      <ul className="mt-[16px] text-[31px] leading-[49px]">
        {[0, 1].map((i) => (
          <li key={i} className="relative flex items-center whitespace-nowrap">
            <span className="absolute left-[-27px] mt-[4px] h-[11px] w-[11px] rounded-full bg-[#212529]" />
            <span className="tracking-[0.1px]">Latitude: 48.8775347 Longitude:2.0910809</span>
          </li>
        ))}
      </ul>

      <h3 className="mt-[96px] h-[67px] text-[54px] leading-[67px] font-medium tracking-[0.6px] whitespace-nowrap [-webkit-text-stroke:0.7px_#212529]">
        Vos playlists:
      </h3>

      <article className="mt-[63px] ml-[48px] h-[256px] w-[480px] overflow-hidden rounded-[8px] border-2 border-[#dfdfdf] bg-white">
        <header className="flex h-[82px] items-center border-b-2 border-[#d9d9d9] bg-[#f7f7f7] pl-[32px] text-[31px] tracking-[0.4px]">
          Playlist
        </header>
      </article>

      <button className="mt-[76px] ml-[32px] block" aria-label="Lecture">
        <svg className="block h-[28px] w-[22px]" viewBox="0 0 22 28">
          <path d="M0 0 L22 14 L0 28Z" fill="#008000" />
        </svg>
      </button>
    </main>
  );
}
